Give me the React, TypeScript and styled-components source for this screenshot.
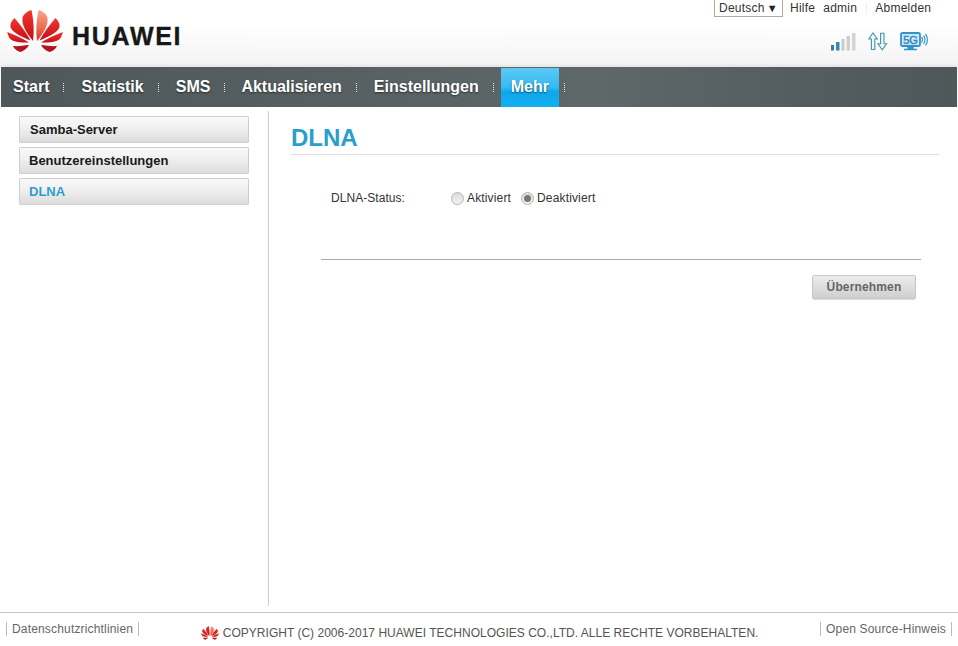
import React from "react";
import styled, { createGlobalStyle } from "styled-components";

const Global = createGlobalStyle`
  html, body { margin: 0; padding: 0; background: #fff; }
  body { font-family: "Liberation Sans", Arial, sans-serif; }
`;

const Page = styled.div`
  width: 958px;
  height: 646px;
  display: flex;
  flex-direction: column;
  overflow: hidden;
  background: #fff;
`;

const Header = styled.header`
  height: 67px;
  flex: none;
  display: flex;
  justify-content: space-between;
  background: linear-gradient(#fff 0, #fff 25px, #f3f3f3 100%);
`;

const Brand = styled.div`
  display: flex;
  align-items: flex-start;
  padding: 10px 0 0 7px;
`;

const BrandName = styled.span`
  font-size: 25px;
  font-weight: bold;
  letter-spacing: 1.7px;
  color: #171717;
  line-height: 28px;
  margin: 12px 0 0 9px;
  -webkit-text-stroke: 0.3px #171717;
`;

const HeaderRight = styled.div`
  width: 244px;
  display: flex;
  flex-direction: column;
`;

const TopLinks = styled.div`
  display: flex;
  align-items: flex-start;
  font-size: 12px;
  letter-spacing: 0.25px;
  color: #333;
  line-height: 17px;
`;

const LangSelect = styled.div`
  width: 69px;
  height: 17px;
  box-sizing: border-box;
  border: 1px solid #aaa;
  border-top: none;
  background: #fff;
  padding: 0 0 0 4px;
  display: flex;
  justify-content: space-between;
  line-height: 17px;
  margin-right: 7px;
`;

const Caret = styled.span`
  font-size: 11px;
  color: #222;
  padding-right: 4px;
`;

const TopLink = styled.span<{ $gap: number }>`
  margin-right: ${(p) => p.$gap}px;
`;

const TopSep = styled.span`
  width: 1px;
  height: 11px;
  margin: 3px 8px 0 0;
  background: #eee;
`;

const StatusIcons = styled.div`
  display: flex;
  align-items: center;
  margin: 15px 0 0 116px;
`;

const Nav = styled.nav`
  height: 40px;
  flex: none;
  margin: 0 1px;
  display: flex;
  align-items: stretch;
  background: linear-gradient(90deg, #4e575a 0, #555f61 30%, #5e6869 62%, #535c5f 85%, #4e575a 100%);
  box-shadow: 0 -2px 3px rgba(0, 0, 0, 0.06);
`;

const NavItem = styled.a<{ $lead: number; $active?: boolean }>`
  display: flex;
  align-items: center;
  font-size: 16px;
  font-weight: bold;
  color: #fff;
  padding: 0 ${(p) => (p.$active ? 10 : 14)}px ${(p) => (p.$active ? 1 : 0)}px ${(p) => (p.$active ? 10 : p.$lead)}px;
  margin: ${(p) => (p.$active ? "1px 5px 0 7px" : "0")};
  text-shadow: 0 1px 2px rgba(0, 0, 0, 0.55);
  background: ${(p) => (p.$active ? "linear-gradient(#5cc8f5 0, #35baf2 50%, #0ea8ec 60%, #12b0f0 100%)" : "none")};
`;

const NavSep = styled.span`
  align-self: center;
  width: 1px;
  height: 9px;
  background: repeating-linear-gradient(#dfe3e3 0 1px, transparent 1px 2px);
`;

const Body = styled.div`
  flex: 1;
  display: flex;
  min-height: 0;
`;

const Sidebar = styled.aside`
  width: 249px;
  flex: none;
  margin: 4px 0 6px;
  border-right: 1px solid #ccc;
  padding: 5px 0 0 19px;
  display: flex;
  flex-direction: column;
  gap: 4px;
`;

const SideItem = styled.a<{ $active?: boolean; $indent: number }>`
  width: 230px;
  height: 27px;
  box-sizing: border-box;
  border: 1px solid #cfcfcf;
  border-radius: 1px;
  padding-left: ${(p) => p.$indent}px;
  font-size: 13px;
  font-weight: bold;
  line-height: 25px;
  color: ${(p) => (p.$active ? "#2f9fcb" : "#1a1a1a")};
  background: linear-gradient(#f8f8f8 0, #f1f1f1 40%, #dcdcdc 100%);
`;

const Main = styled.main`
  flex: 1;
  padding: 14px 19px 0 22px;
  display: flex;
  flex-direction: column;
`;

const Title = styled.h1`
  margin: 0;
  height: 33px;
  font-size: 24px;
  font-weight: bold;
  line-height: 33px;
  color: #2a9fcb;
  border-bottom: 1px solid #ddd;
`;

const FormRow = styled.div`
  display: flex;
  align-items: center;
  height: 16px;
  margin: 35px 0 0 40px;
  font-size: 12px;
  letter-spacing: 0.05px;
  color: #333;
`;

const FieldLabel = styled.span`
  width: 120px;
`;

const RadioLabel = styled.label`
  display: flex;
  align-items: center;
  margin-right: 10px;
  letter-spacing: 0.15px;
`;

const RadioDot = styled.span<{ $checked?: boolean }>`
  width: 13px;
  height: 13px;
  box-sizing: border-box;
  border: 1px solid #b4b4b4;
  border-radius: 50%;
  margin-right: 3px;
  display: flex;
  align-items: center;
  justify-content: center;
  background: linear-gradient(#dcdcdc, #f2f2f2);
  &::after {
    content: "";
    display: ${(p) => (p.$checked ? "block" : "none")};
    width: 7px;
    height: 7px;
    border-radius: 50%;
    background: #777;
  }
`;

const Divider = styled.hr`
  margin: 53px 18px 0 30px;
  border: none;
  height: 1px;
  background: #a8a8a8;
`;

const Actions = styled.div`
  display: flex;
  justify-content: flex-end;
  margin: 15px 23px 0 0;
`;

const ApplyButton = styled.button`
  width: 104px;
  height: 24px;
  border: 1px solid #c8c8c8;
  border-radius: 2px;
  font: bold 12px "Liberation Sans", Arial, sans-serif;
  letter-spacing: 0.15px;
  color: #666;
  padding: 0;
  background: linear-gradient(#ececec 0, #e2e2e2 35%, #cfcfcf 100%);
  box-shadow: 0 1px 1px rgba(0, 0, 0, 0.15);
`;

const Footer = styled.footer`
  height: 33px;
  flex: none;
  border-top: 1px solid #c4c4c4;
  display: flex;
  align-items: flex-start;
  font-size: 12px;
  color: #666;
  letter-spacing: 0.17px;
`;

const FooterLink = styled.span<{ $side: "left" | "right" }>`
  margin: 9px ${(p) => (p.$side === "right" ? 6 : 0)}px 0 ${(p) => (p.$side === "left" ? 6 : 0)}px;
  padding: 0 5px;
  height: 14px;
  line-height: 14px;
  border-left: 1px solid #bbb;
  border-right: 1px solid #bbb;
`;

const Copyright = styled.div`
  flex: 1;
  display: flex;
  justify-content: center;
  align-items: center;
  padding-top: 12px;
  line-height: 16px;
  color: #555;
  letter-spacing: 0.02px;
  gap: 4px;
`;

const Petals = ({ w, h }: { w: number; h: number }) => (
  <svg width={w} height={h} viewBox="6.5 10 56 42.5">
    <defs>
      <linearGradient id="pr" x1="0" y1="0" x2="0" y2="1">
        <stop offset="0" stopColor="#f4352a" />
        <stop offset="1" stopColor="#c20f18" />
      </linearGradient>
      <linearGradient id="pl" x1="0" y1="0" x2="0" y2="1">
        <stop offset="0" stopColor="#f8a58c" />
        <stop offset="0.6" stopColor="#ea6a50" />
        <stop offset="1" stopColor="#d8301f" />
      </linearGradient>
    </defs>
    <path d="M32.5 41C26 33 21 25 22 18C23 14 27 11 31 10C33 20 34 30 32.5 41Z" fill="url(#pr)" />
    <path d="M36.5 41C35 30 36 20 38 10C42 11 46 14 47 18C48 25 43 33 36.5 41Z" fill="url(#pl)" />
    <path d="M30 40.5C22 37 12 33 10 27C9.5 24 11 21 14 18C20 25 26 33 30 40.5Z" fill="url(#pr)" />
    <path d="M39 40.5C47 37 57 33 59 27C59.5 24 58 21 55 18C49 25 43 33 39 40.5Z" fill="url(#pr)" />
    <path d="M28.5 42.5C20 43 12 42 9 38C8 36 7 34 6.8 32C14 35 22 38 28.5 42.5Z" fill="url(#pr)" />
    <path d="M40.5 42.5C49 43 57 42 60 38C61 36 62 34 62.2 32C55 35 47 38 40.5 42.5Z" fill="url(#pr)" />
    <path d="M28.5 45C23 45.5 18 46.5 12.5 46C14 49 17 51.5 20 52C24 50.5 27 48 28.5 45Z" fill="#b5141c" />
    <path d="M40.5 45C46 45.5 51 46.5 56.5 46C55 49 52 51.5 49 52C45 50.5 42 48 40.5 45Z" fill="#b5141c" />
  </svg>
);

const SignalIcon = () => (
  <svg width="26" height="18" viewBox="0 0 26 18">
    <rect x="1" y="12" width="3" height="5.5" fill="#2f7fb0" />
    <rect x="6" y="9" width="3.5" height="8.5" fill="#3a87b6" />
    <rect x="11.5" y="6" width="3" height="11.5" fill="#c4cbcd" />
    <rect x="16.5" y="3" width="3.5" height="14.5" fill="#cbd0d1" />
    <rect x="22" y="0" width="3.5" height="17.5" fill="#d0d4d5" />
  </svg>
);

const ArrowsIcon = () => (
  <svg width="20" height="19" viewBox="0 0 20 19" fill="#f1f8fb" stroke="#4592b0" strokeWidth="1.1" style={{ marginLeft: 12 }}>
    <path d="M5 1L9.3 7H6.8V17.5H3.4V7H.8Z" />
    <path d="M14.2 17.8L10 11.8H12.6V1.2H16V11.8H18.6Z" />
  </svg>
);

const FiveGIcon = () => (
  <svg width="29" height="19" viewBox="0 0 29 19" style={{ marginLeft: 12 }}>
    <rect x="1" y="1" width="19" height="13" rx="1.5" fill="#cfe6f4" stroke="#2f93cc" strokeWidth="1.8" />
    <text x="10.5" y="11.5" textAnchor="middle" fontSize="11" fontFamily="Liberation Sans, Arial, sans-serif" stroke="#2f86bb" strokeWidth="0.4" fill="#2f86bb">5G</text>
    <path d="M8 15.5H13V17H8ZM4 17.5H17" fill="#2f93cc" stroke="#2f93cc" strokeWidth="1.3" />
    <path d="M21.5 5Q23.5 7.5 21.5 10.5M23.5 3.5Q26.5 7.5 23.5 12M25.5 2Q29.5 7.5 25.5 13.5" fill="none" stroke="#4a9cc9" strokeWidth="1.3" />
  </svg>
);

const navItems = [
  { label: "Start", lead: 12 },
  { label: "Statistik", lead: 17 },
  { label: "SMS", lead: 17 },
  { label: "Aktualisieren", lead: 16 },
  { label: "Einstellungen", lead: 17 },
];

export default function App() {
  return (
    <Page>
      <Global />
      <Header>
        <Brand>
          <Petals w={56} h={42.5} />
          <BrandName>HUAWEI</BrandName>
        </Brand>
        <HeaderRight>
          <TopLinks>
            <LangSelect>
              Deutsch
              <Caret>▼</Caret>
            </LangSelect>
            <TopLink $gap={8}>Hilfe</TopLink>
            <TopLink $gap={9}>admin</TopLink>
            <TopSep />
            <TopLink $gap={0}>Abmelden</TopLink>
          </TopLinks>
          <StatusIcons>
            <SignalIcon />
            <ArrowsIcon />
            <FiveGIcon />
          </StatusIcons>
        </HeaderRight>
      </Header>
      <Nav>
        {navItems.map((n) => (
          <React.Fragment key={n.label}>
            <NavItem $lead={n.lead}>{n.label}</NavItem>
            <NavSep />
          </React.Fragment>
        ))}
        <NavItem $lead={0} $active>
          Mehr
        </NavItem>
        <NavSep />
      </Nav>
      <Body>
        <Sidebar>
          <SideItem $indent={10}>Samba-Server</SideItem>
          <SideItem $indent={9}>Benutzereinstellungen</SideItem>
          <SideItem $indent={9} $active>
            DLNA
          </SideItem>
        </Sidebar>
        <Main>
          <Title>DLNA</Title>
          <FormRow>
            <FieldLabel>DLNA-Status:</FieldLabel>
            <RadioLabel>
              <RadioDot />
              Aktiviert
            </RadioLabel>
            <RadioLabel>
              <RadioDot $checked />
              Deaktiviert
            </RadioLabel>
          </FormRow>
          <Divider />
          <Actions>
            <ApplyButton>Übernehmen</ApplyButton>
          </Actions>
        </Main>
      </Body>
      <Footer>
        <FooterLink $side="left">Datenschutzrichtlinien</FooterLink>
        <Copyright>
          <Petals w={18} h={14} />
          COPYRIGHT (C) 2006-2017 HUAWEI TECHNOLOGIES CO.,LTD. ALLE RECHTE VORBEHALTEN.
        </Copyright>
        <FooterLink $side="right">Open Source-Hinweis</FooterLink>
      </Footer>
    </Page>
  );
}
